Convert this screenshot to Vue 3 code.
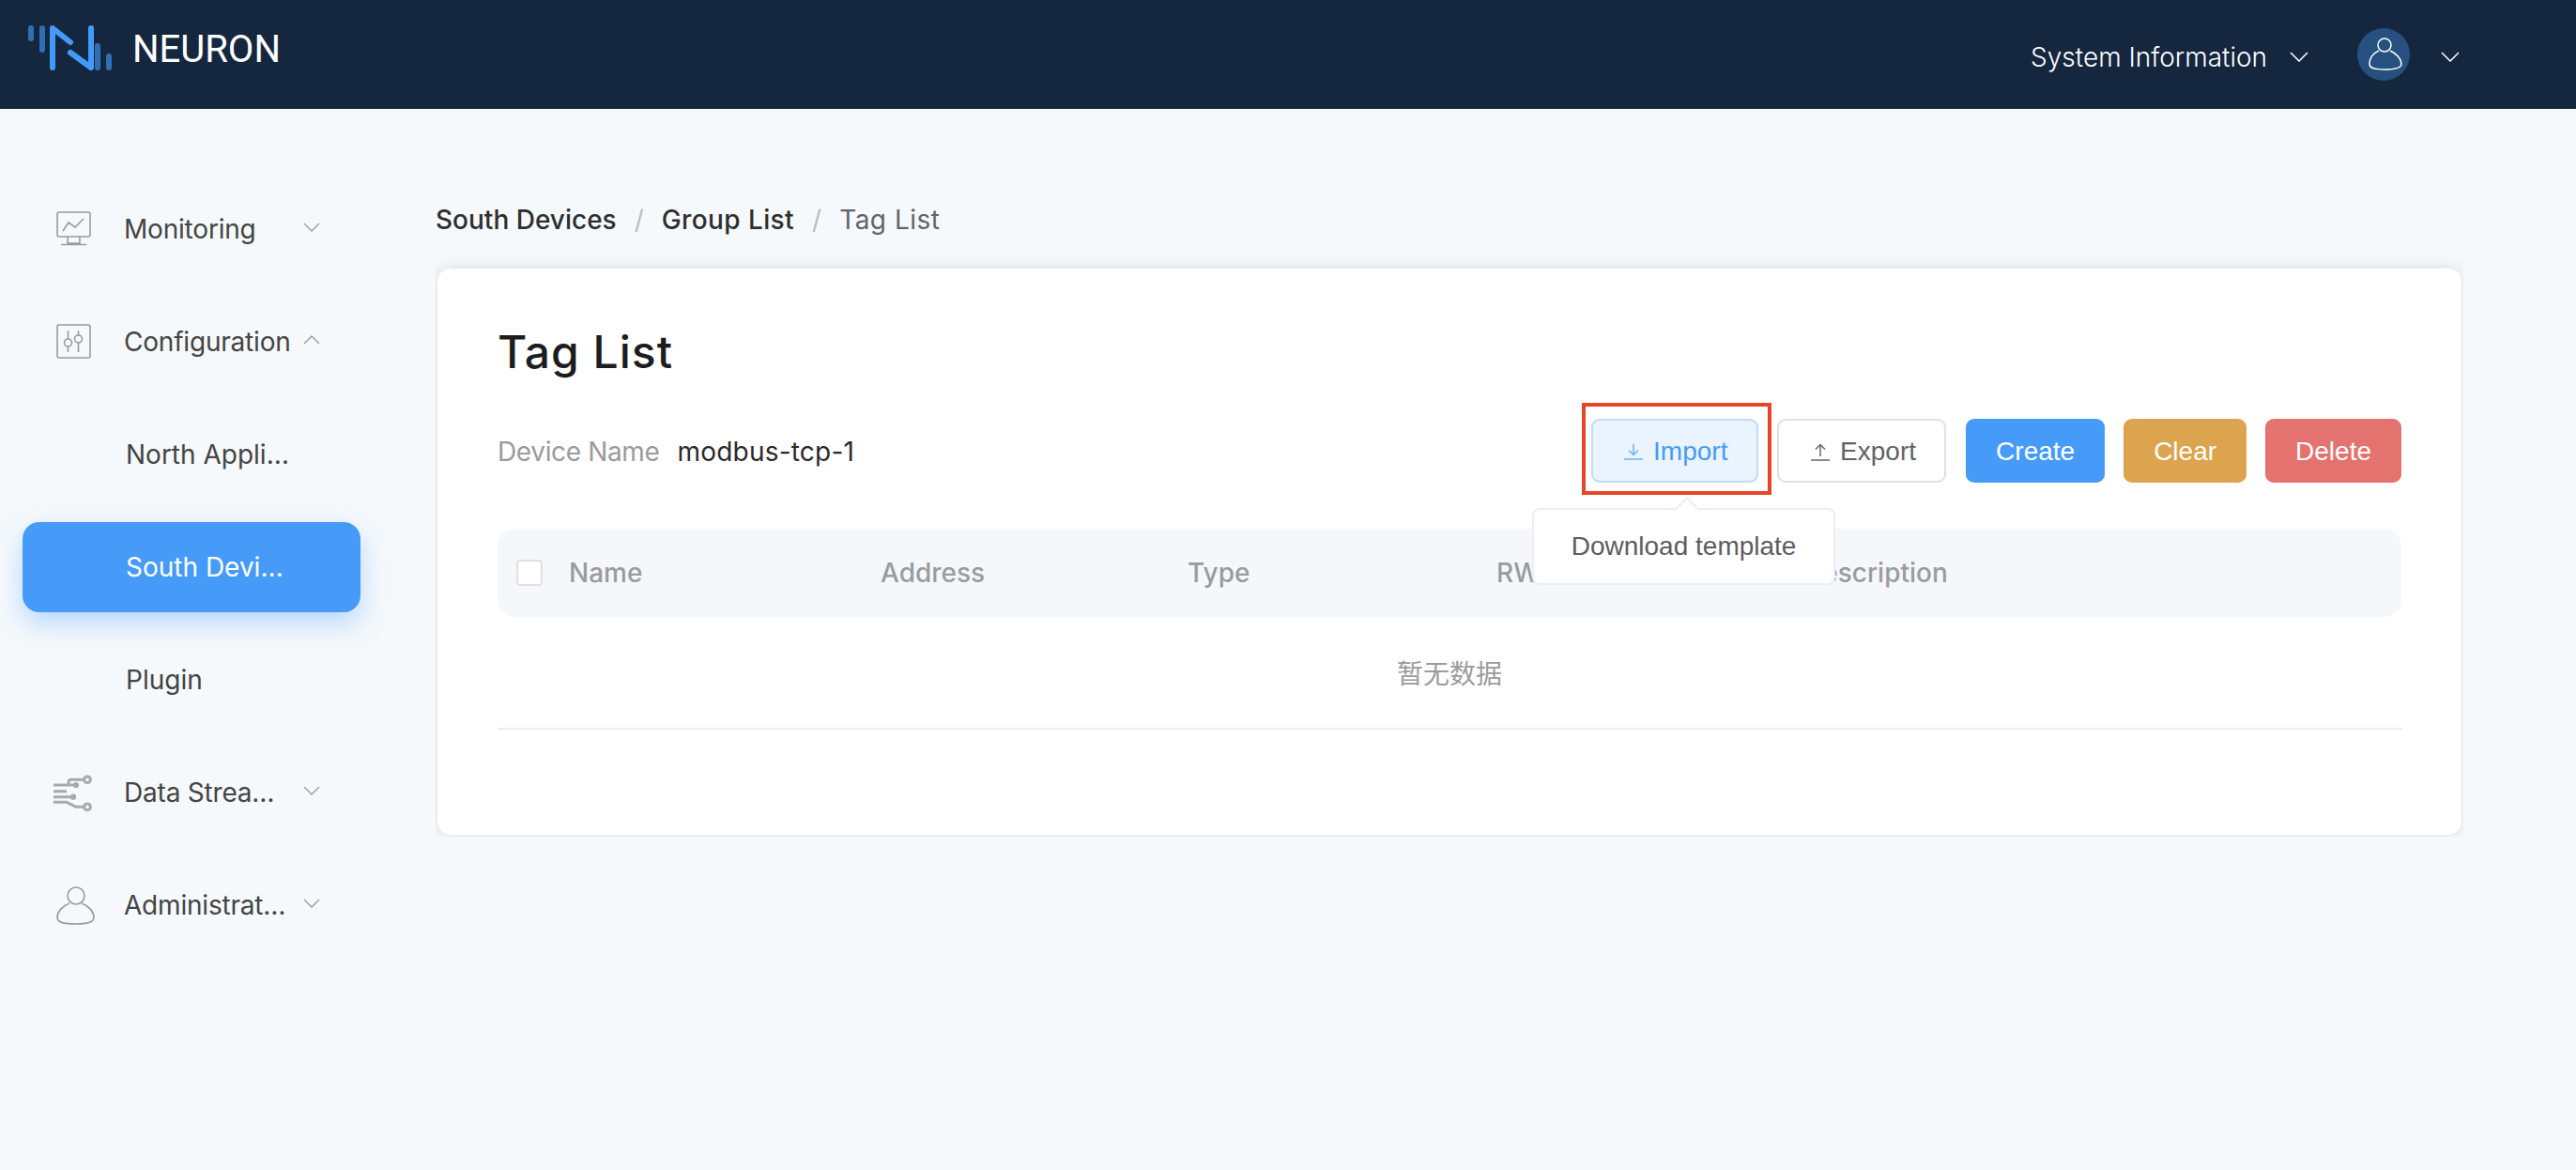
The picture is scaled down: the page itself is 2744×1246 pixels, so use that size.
<script setup>
const columns = ['Name', 'Address', 'Type', 'RW', 'Description'];
</script>

<template>
  <div class="page">
    <header class="topbar">
      <div class="brand">
        <svg class="logo" width="89" height="48" viewBox="0 0 89 48" fill="none" stroke-linecap="round" stroke-width="6">
          <path d="M3 3V14M15 3V26M74 22V45M86 33V45" stroke="#2f6fb2" />
          <path d="M26 45V3L45 18M45 29L67 45V3" stroke="#429bfb" stroke-linejoin="round" />
        </svg>
        <span class="brand-name">NEURON</span>
      </div>
      <div class="top-actions">
        <span class="sys-info">System Information</span>
        <svg class="top-chevron" width="20" height="11" viewBox="0 0 20 11" fill="none" stroke="#fff" stroke-width="1.5"><path d="M1 1L10 10L19 1" /></svg>
        <span class="avatar">
          <svg width="56" height="56" viewBox="0 0 56 56" fill="none" stroke="#fff" stroke-width="1.5">
            <circle cx="29" cy="18" r="7" />
            <path d="M23 24C16 27 13 33 13 38C13 43 19 44 29 44C39 44 47 43 47 38C47 33 42 27 35 24" />
          </svg>
        </span>
        <svg class="top-chevron last" width="20" height="11" viewBox="0 0 20 11" fill="none" stroke="#fff" stroke-width="1.5"><path d="M1 1L10 10L19 1" /></svg>
      </div>
    </header>

    <div class="layout">
      <aside class="sidebar">
        <div class="nav-item">
          <svg class="nav-icon" width="40" height="40" viewBox="0 0 40 40" fill="none" stroke="#9a9a9e" stroke-width="1.6">
            <rect x="1" y="1" width="35" height="26" rx="2" />
            <path d="M7 21L13 12L20 17L29 8" />
            <path d="M12 27V34H25V27M5 35.5H32" />
          </svg>
          <span class="nav-text">Monitoring</span>
          <svg class="nav-chevron" width="18" height="10" viewBox="0 0 18 10" fill="none" stroke="#9a9a9e" stroke-width="1.3"><path d="M1 1L9 9L17 1" /></svg>
        </div>
        <div class="nav-item">
          <svg class="nav-icon" width="40" height="40" viewBox="0 0 40 40" fill="none" stroke="#9a9a9e" stroke-width="1.6">
            <rect x="1" y="1" width="35" height="35" rx="2" />
            <path d="M12.5 7V16M12.5 24V30M23.5 7V12M23.5 20V30" />
            <circle cx="12.5" cy="20" r="4" />
            <circle cx="23.5" cy="16" r="4" />
          </svg>
          <span class="nav-text">Configuration</span>
          <svg class="nav-chevron" width="18" height="10" viewBox="0 0 18 10" fill="none" stroke="#9a9a9e" stroke-width="1.3"><path d="M1 9L9 1L17 9" /></svg>
        </div>
        <div class="nav-item sub"><span class="nav-text">North Applications</span></div>
        <div class="nav-item sub active"><span class="nav-text">South Devices</span></div>
        <div class="nav-item sub"><span class="nav-text">Plugin</span></div>
        <div class="nav-item">
          <svg class="nav-icon stream" width="41" height="40" viewBox="0 0 41 40" fill="none" stroke="#a8a9ad" stroke-width="3">
            <circle cx="36" cy="5.3" r="3.4" />
            <circle cx="36" cy="34.3" r="3.4" />
            <path d="M32.5 5.3H19Q16 5.3 16 8V11M0 11H24M0 17.7H14M0 23.7H21M0 29.3H14L24 34.3H32.5" />
            <circle cx="24" cy="11" r="1.6" fill="#a8a9ad" />
            <circle cx="21" cy="23.7" r="1.6" fill="#a8a9ad" />
          </svg>
          <span class="nav-text">Data Stream Processing</span>
          <svg class="nav-chevron" width="18" height="10" viewBox="0 0 18 10" fill="none" stroke="#9a9a9e" stroke-width="1.3"><path d="M1 1L9 9L17 1" /></svg>
        </div>
        <div class="nav-item">
          <svg class="nav-icon admin" width="42" height="42" viewBox="0 0 42 42" fill="none" stroke="#9a9a9e" stroke-width="1.6">
            <circle cx="21" cy="10" r="9" />
            <path d="M14 18C6 21 1 27 1 33C1 39 9 40 20 40C31 40 40 39 40 33C40 27 35 21 27 18" />
          </svg>
          <span class="nav-text">Administration</span>
          <svg class="nav-chevron" width="18" height="10" viewBox="0 0 18 10" fill="none" stroke="#9a9a9e" stroke-width="1.3"><path d="M1 1L9 9L17 1" /></svg>
        </div>
      </aside>

      <main class="content">
        <nav class="breadcrumb">
          <span class="crumb">South Devices</span>
          <span class="sep">/</span>
          <span class="crumb mid">Group List</span>
          <span class="sep">/</span>
          <span class="crumb current">Tag List</span>
        </nav>

        <div class="card-clip">
          <section class="card">
            <h1 class="title">Tag List</h1>
            <div class="toolbar">
              <div class="device">
                <span class="device-label">Device Name</span>
                <span class="device-value">modbus-tcp-1</span>
              </div>
              <div class="buttons">
                <div class="import-wrap">
                  <button class="btn outline import">
                    <svg width="20" height="18" viewBox="0 0 20 18" fill="none" stroke="#6db3fa" stroke-width="1.5"><path d="M10 1V12M5 7.5L10 12.5L15 7.5M0 17H20" /></svg>
                    Import
                  </button>
                  <span class="highlight"></span>
                  <div class="tooltip">
                    <span class="tooltip-arrow"></span>
                    Download template
                  </div>
                </div>
                <button class="btn outline export">
                  <svg width="20" height="19" viewBox="0 0 20 19" fill="none" stroke="#66676c" stroke-width="1.5"><path d="M10 14V2M5 6.5L10 1.5L15 6.5M0 18H20" /></svg>
                  Export
                </button>
                <button class="btn primary">Create</button>
                <button class="btn warning">Clear</button>
                <button class="btn danger">Delete</button>
              </div>
            </div>

            <div class="table">
              <div class="table-head">
                <span class="checkbox"></span>
                <span v-for="col in columns" :key="col" class="th">{{ col }}</span>
              </div>
              <div class="table-empty">暂无数据</div>
            </div>
          </section>
        </div>
      </main>
    </div>
  </div>
</template>

<style scoped>
.page {
  min-height: 1246px;
  background: #f5f9fc;
  font-family: Inter, "Noto Sans CJK SC", sans-serif;
  font-size: 28px;
  color: #444;
}

.topbar {
  height: 116px;
  background: #15273f;
  display: flex;
  justify-content: space-between;
  color: #fff;
}

.brand {
  display: flex;
  align-items: flex-start;
  padding: 27px 0 0 30px;
  gap: 22px;
}

.brand-name {
  font-family: Roboto, sans-serif;
  font-size: 40px;
  line-height: 48px;
  height: 48px;
  margin-top: 2px;
}

.top-actions {
  display: flex;
  align-items: center;
  padding: 0 124px 0 0;
}

.sys-info {
  font-weight: 300;
  font-size: 28px;
  margin-top: 5px;
}

.top-chevron {
  margin: 4px 0 0 24px;
}

.top-chevron.last {
  margin-left: 33px;
}

.avatar {
  width: 56px;
  height: 56px;
  border-radius: 50%;
  background: #25507f;
  margin-left: 52px;
  display: block;
}

.layout {
  display: flex;
}

.sidebar {
  width: 464px;
  box-sizing: border-box;
  padding: 80px 80px 0 24px;
  display: flex;
  flex-direction: column;
  gap: 24px;
}

.nav-item {
  height: 96px;
  display: flex;
  align-items: center;
  padding-left: 36px;
  position: relative;
}

.nav-icon {
  flex: none;
  margin-right: 32px;
  margin-top: 2px;
}

.nav-icon.stream {
  margin-left: -3px;
  margin-right: 34px;
}

.nav-icon.admin {
  margin-right: 30px;
}

.nav-text {
  width: 178px;
  letter-spacing: -0.2px;
  white-space: nowrap;
  overflow: hidden;
  text-overflow: ellipsis;
}

.nav-chevron {
  margin: -4px 0 0 13px;
}

.nav-item.sub {
  padding-left: 110px;
}

.nav-item.sub .nav-text {
  letter-spacing: 0;
}

.nav-item.active {
  background: #469bf8;
  color: #fff;
  border-radius: 18px;
  box-shadow: 0 12px 28px rgba(70, 155, 248, 0.35);
}

.content {
  width: 2160px;
  padding-top: 98px;
}

.breadcrumb {
  height: 40px;
  line-height: 40px;
  margin-bottom: 14px;
  display: flex;
  position: relative;
  z-index: 1;
}

.crumb {
  font-weight: 500;
  color: #2e2e2e;
}

.crumb.mid {
  letter-spacing: 0.4px;
}

.crumb.current {
  font-weight: 400;
  color: #62646a;
  letter-spacing: 0.5px;
}

.sep {
  color: #bbbcc0;
  margin: 0 19px;
}

/* the card shadow is cut off by its wrapper on the left, right and bottom */
.card-clip {
  overflow: hidden;
  padding: 18px 2px 2px;
}

.card {
  background: #fff;
  border-radius: 14px;
  box-shadow: 0 0 16px rgba(30, 40, 70, 0.14);
  padding: 59px 64px 112px;
}

.title {
  margin: 0;
  font-size: 48px;
  line-height: 60px;
  font-weight: 500;
  letter-spacing: 1px;
  color: #1d1d1f;
}

.toolbar {
  margin-top: 41px;
  height: 68px;
  display: flex;
  justify-content: space-between;
  align-items: center;
}

.device {
  padding-top: 2px;
}

.device-label {
  color: #9a9a9f;
  margin-right: 19px;
  letter-spacing: -0.35px;
}

.device-value {
  color: #2a2a2c;
  letter-spacing: 0.2px;
}

.buttons {
  display: flex;
  gap: 20px;
}

.btn {
  height: 68px;
  box-sizing: border-box;
  padding: 2px 32px 0;
  border: none;
  border-radius: 9px;
  font-family: "Liberation Sans", sans-serif;
  font-size: 28px;
  color: #fff;
  display: flex;
  align-items: center;
  gap: 11px;
}

.btn svg {
  flex: none;
}

.btn.outline {
  background: #fff;
  border: 2px solid #dfe0e6;
  color: #606266;
}

.btn.export {
  width: 180px;
  padding: 2px 0 0 34px;
  margin-right: 1px;
}

.btn.import {
  width: 178px;
  padding: 2px 0 0 33px;
  background: #e9f4fe;
  border-color: #bcddfc;
  color: #469bf8;
}

.btn.primary {
  background: #469bf8;
}

.btn.warning {
  background: #dca44f;
}

.btn.danger {
  background: #e4736f;
}

.import-wrap {
  position: relative;
}

.highlight {
  position: absolute;
  left: -10px;
  top: -17px;
  width: 202px;
  height: 98px;
  box-sizing: border-box;
  border: 4px solid #e9432a;
}

.tooltip {
  position: absolute;
  z-index: 2;
  left: -63px;
  top: 95px;
  width: 323px;
  height: 82px;
  box-sizing: border-box;
  background: #fff;
  border: 2px solid #ebeef5;
  border-radius: 8px;
  font-family: "Liberation Sans", sans-serif;
  color: #5c5d61;
  display: flex;
  align-items: center;
  justify-content: center;
}

.tooltip-arrow {
  position: absolute;
  top: -10px;
  left: 153px;
  width: 18px;
  height: 18px;
  background: #fff;
  border-left: 2px solid #ebeef5;
  border-top: 2px solid #ebeef5;
  transform: rotate(45deg);
}

.table-head {
  margin-top: 49px;
  height: 94px;
  background: #f5f8fb;
  border-radius: 18px;
  display: grid;
  grid-template-columns: 76px 332px 327px 329px 327px 1fr;
  align-items: center;
  position: relative;
  color: #9a9b9f;
  font-weight: 500;
}

.checkbox {
  width: 28px;
  height: 28px;
  box-sizing: border-box;
  background: #fff;
  border: 2px solid #dfe0e6;
  border-radius: 4px;
  margin-left: 20px;
}

.table-empty {
  height: 120px;
  box-sizing: border-box;
  border-bottom: 2px solid #ebebf0;
  display: flex;
  align-items: center;
  justify-content: center;
  color: #9a9b9f;
}
</style>

<style>
body {
  background: #f5f9fc;
}
</style>
